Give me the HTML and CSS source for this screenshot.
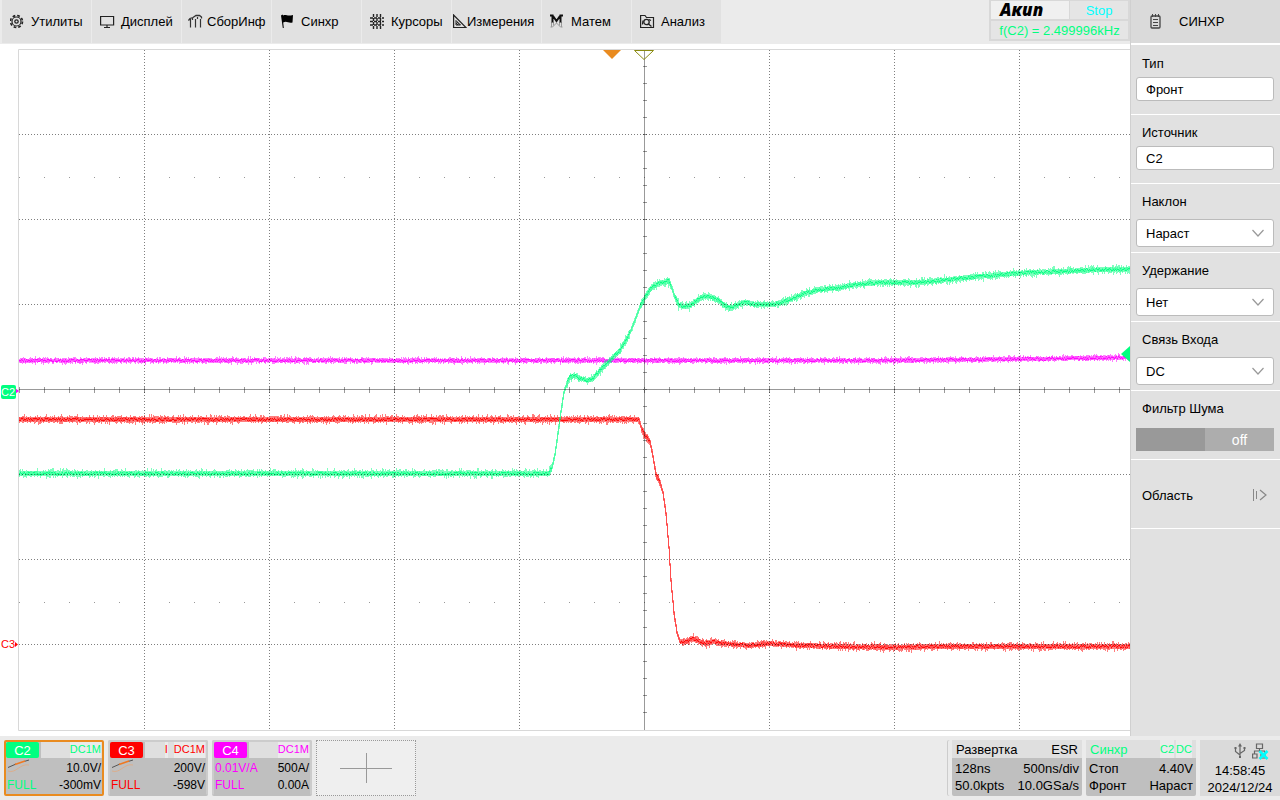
FILE: index.html
```html
<!DOCTYPE html>
<html lang="ru">
<head>
  <meta charset="UTF-8">
  <title>Акип - Осциллограф</title>
  <link rel="stylesheet" href="styles.css">
</head>
<body>

  <div class="main">
    <div class="screen">
      <header class="topbar">
        <nav class="menu">
          <button type="button">
            <svg width="16" height="16" viewBox="0 0 16 16" fill="none" stroke="#222">
              <circle cx="6.500" cy="7.500" r="6" stroke-width="1.600" stroke-dasharray="2.700 2.010"/>
              <circle cx="6.500" cy="7.500" r="4.500" stroke-width="1.200"/>
              <circle cx="6.500" cy="7.500" r="1.700" stroke-width="1.300"/>
            </svg>
            <span>Утилиты</span>
          </button>
          <button type="button">
            <svg width="16" height="16" viewBox="0 0 16 16" fill="none" stroke="#222">
              <path d="M.6 2.500h13v8.500h-13zM7 11v2M4 13.500h6" stroke-width="1.200"/>
            </svg>
            <span>Дисплей</span>
          </button>
          <button type="button" class="close">
            <svg width="16" height="16" viewBox="0 0 16 16" fill="none" stroke="#333">
              <path d="M.5 6.500L2 4.500L5 3.500L8 1.500H11.500L13.500 3V4.500" stroke-width="1.300"/>
              <path d="M2.500 5V13.500M7.500 5V13.500M12.500 5V13.500M4.500 4V6M9.500 3V5" stroke-width="1.200"/>
            </svg>
            <span>СборИнф</span>
          </button>
          <button type="button">
            <svg width="16" height="16" viewBox="0 0 16 16">
              <path d="M1 1.500L2.500 .5L3.200 1.500C6 0 7 2.500 13 1L12.500 8.500C8 9.500 7 6.500 3.200 8.500L3.800 14H2.800z" fill="#000"/>
            </svg>
            <span>Синхр</span>
          </button>
          <button type="button">
            <svg width="16" height="16" viewBox="0 0 16 16" fill="none" stroke="#222">
              <path d="M3.500 0V15M7 0V15M10.500 0V15" stroke-width="1.400" stroke-dasharray="3 1"/>
              <path d="M0 4H14M0 7.500H14M0 11H14" stroke-width="1.400" stroke-dasharray="3 1"/>
            </svg>
            <span>Курсоры</span>
          </button>
          <button type="button" class="closest">
            <svg width="14" height="16" viewBox="0 0 14 16" fill="none" stroke="#222">
              <path d="M.6 1V13.500H13z" stroke-width="1.200"/>
              <path d="M3 6.500V11H7.500zM3 9L5 11M4 8L6.500 11"/>
            </svg>
            <span>Измерения</span>
          </button>
          <button type="button">
            <svg width="16" height="16" viewBox="0 0 16 16" fill="none" stroke="#111">
              <path d="M.5 13H2.500L6.500 9L10.500 13H12.500M1.500 13V8M3.500 11.500V8M9.500 11.500V8M11.500 13V8" stroke="#999"/>
              <path d="M0 1.500H3.500M9.500 1.500H13M2.500 1.500V8.500M10.500 1.500V8.500M3 2L6.500 7L10 2" stroke-width="2"/>
            </svg>
            <span>Матем</span>
          </button>
          <button type="button">
            <svg width="16" height="16" viewBox="0 0 16 16" fill="none" stroke="#222">
              <path d="M.6 1.500H5L6.500 3.500H13.500V13.500H.6z" stroke-width="1.200"/>
              <circle cx="6.500" cy="8" r="2.700" stroke-width="1.300"/>
              <path d="M8.500 10L11.500 12.500M3 6.500L2.500 10.500M9 5.500L11 6.500" stroke-width="1.300"/>
            </svg>
            <span>Анализ</span>
          </button>
        </nav>
        <div class="status">
          <div class="logo">Акип</div>
          <div class="state">Stop</div>
          <div class="freq">f(C2) = 2.499996kHz</div>
        </div>
      </header>

      <div class="plot">
        <svg id="plot" viewBox="0 44 1130 692" preserveAspectRatio="none">
          <path class="frame" d="M1130 49.500H18.500V730.500H1130"/>
          <g id="traces"></g>
          <g id="grid"></g>
          <path d="M603 50H621L612 59z" fill="#e98b20"/>
          <path d="M634.500 50.500H653.500L644 59.500z" fill="none" stroke="#8a8a10"/>
          <path d="M1130 346V362L1121 354z" fill="#00ff80"/>
          <path d="M15 388L19 391L15 394z" fill="#ff00ff"/>
          <path d="M15 642L18 644.500L15 647z" fill="#ff0000"/>
        </svg>
        <span class="marker marker-c2">C2</span>
        <span class="marker marker-c3">C3</span>
      </div>
    </div>

    <aside class="panel">
      <h2>
        <svg width="12" height="15" viewBox="0 0 12 15" fill="none" stroke="#444">
          <rect x="1" y="2" width="9" height="12" rx="1" stroke-width="1.300"/>
          <path d="M3 5.500H8M3 8.500H8M3 11.500H8M2.500 0V3M5.500 0V3M8.500 0V3"/>
        </svg>
        СИНХР
      </h2>
      <div class="field">
        <label for="type">Тип</label>
        <input type="text" id="type" value="Фронт">
      </div>
      <div class="field">
        <label for="source">Источник</label>
        <input type="text" id="source" value="C2">
      </div>
      <div class="field">
        <label for="slope">Наклон</label>
        <div class="select">
          <select id="slope"><option>Нараст</option></select>
          <svg width="12" height="8" viewBox="0 0 12 8"><path d="M.5 1L6 7L11.500 1"/></svg>
        </div>
      </div>
      <div class="field">
        <label for="holdoff">Удержание</label>
        <div class="select">
          <select id="holdoff"><option>Нет</option></select>
          <svg width="12" height="8" viewBox="0 0 12 8"><path d="M.5 1L6 7L11.500 1"/></svg>
        </div>
      </div>
      <div class="field">
        <label for="coupling">Связь Входа</label>
        <div class="select">
          <select id="coupling"><option>DC</option></select>
          <svg width="12" height="8" viewBox="0 0 12 8"><path d="M.5 1L6 7L11.500 1"/></svg>
        </div>
      </div>
      <div class="field">
        <label for="noise">Фильтр Шума</label>
        <div class="switch">
          <input type="checkbox" id="noise">
          <span>off</span>
        </div>
      </div>
      <button type="button" class="zone">
        Область
        <svg width="16" height="14" viewBox="0 0 16 14" fill="none" stroke="#888">
          <path d="M1.500 1V13M4.500 3V11" />
          <path d="M8 2L14 7L8 12" stroke-width="1.200"/>
        </svg>
      </button>
    </aside>
  </div>

  <footer class="bottombar">
    <button type="button" class="channel c2 active">
      <span class="chip">C2</span>
      <span class="input"><b>DC1M</b></span>
      <span class="row">
        <svg width="24" height="14" viewBox="0 0 24 14" fill="none">
          <path d="M1 12C9 15 13 4 22 6" stroke="#dcae8c"/>
          <path d="M1 8.500L9 5M17 2.500L22 1" stroke="#555"/>
          <path d="M8 5.500L18 2" stroke="#f07820" stroke-width="1.600"/>
        </svg>
        <span>10.0V/</span>
      </span>
      <span class="row"><em>FULL</em><span>-300mV</span></span>
    </button>
    <button type="button" class="channel c3">
      <span class="chip">C3</span>
      <span class="input"><b>I</b><b>DC1M</b></span>
      <span class="row">
        <svg width="24" height="14" viewBox="0 0 24 14" fill="none">
          <path d="M1 12C9 15 13 4 22 6" stroke="#dcae8c"/>
          <path d="M1 8.500L9 5M17 2.500L22 1" stroke="#555"/>
          <path d="M8 5.500L18 2" stroke="#f07820" stroke-width="1.600"/>
        </svg>
        <span>200V/</span>
      </span>
      <span class="row"><em>FULL</em><span>-598V</span></span>
    </button>
    <button type="button" class="channel c4">
      <span class="chip">C4</span>
      <span class="input"><b>DC1M</b></span>
      <span class="row"><em>0.01V/A</em><span>500A/</span></span>
      <span class="row"><em>FULL</em><span>0.00A</span></span>
    </button>
    <button type="button" class="add" aria-label="Добавить">
      <svg width="52" height="30" viewBox="0 0 52 30"><path d="M0 15.500H52M26.500 0V30" stroke="#999"/></svg>
    </button>

    <div class="info timebase">
      <div class="head"><span>Развертка</span><span>ESR</span></div>
      <div class="row"><span>128ns</span><span>500ns/div</span></div>
      <div class="row"><span>50.0kpts</span><span>10.0GSa/s</span></div>
    </div>
    <div class="info trigger">
      <div class="head"><span>Синхр</span><span class="tags"><b>C2</b><b>DC</b></span></div>
      <div class="row"><span>Стоп</span><span>4.40V</span></div>
      <div class="row"><span>Фронт</span><span>Нараст</span></div>
    </div>
    <div class="clock">
      <div class="links">
        <svg width="12" height="16" viewBox="0 0 12 16" fill="none" stroke="#666">
          <path d="M6 2V14M6 12L1.500 8.500V5M6 10.500L10.500 7.500V5" stroke-width="1.200"/>
          <path d="M4 3.500L6 0L8 3.500z" fill="#666" stroke="none"/>
          <path d="M.5 4H2.500V6H.5zM9.500 4H11.500V6H9.500zM5 13H7V15H5z" fill="#666" stroke="none"/>
        </svg>
        <svg width="17" height="17" viewBox="0 0 17 17" fill="none" stroke="#666" stroke-width="1.200">
          <path d="M4.500 1H10.500V5.500H4.500zM7.500 5.500V8M2.500 11V8H12.500V10M.6 11H5V15H.6zM9 11H13V15H9z"/>
          <path d="M7.500 8L15.500 16M15.500 8L7.500 16" stroke="#00ffff" stroke-width="2.500"/>
        </svg>
      </div>
      <div>14:58:45</div>
      <div>2024/12/24</div>
    </div>
  </footer>

  <script src="script.js"></script>
</body>
</html>
```
FILE: styles.css
```css
* {
  box-sizing: border-box;
  margin: 0;
  padding: 0;
}

body {
  display: flex;
  flex-direction: column;
  height: 100vh;
  background-color: #ebebeb;
  color: #000;
  font-family: "Liberation Sans", Arial, sans-serif;
  font-size: 13px;
}

button, input, select {
  border: 0;
  background: none;
  color: inherit;
  font: inherit;
}

svg {
  display: block;
  flex: none;
}

.main {
  display: flex;
  flex: 1;
  min-height: 0;
}

.screen {
  display: flex;
  flex-direction: column;
  flex: 1;
  min-width: 0;
}

/* верхнее меню */
.topbar {
  display: flex;
  justify-content: space-between;
  align-items: flex-start;
  height: 44px;
}

.menu {
  display: flex;
  gap: 1px;
  padding-left: 2px;
}

.menu button {
  display: flex;
  align-items: center;
  gap: 5px;
  width: 89px;
  height: 43px;
  padding-left: 8px;
  background-color: #e1e1e1;
}

.menu button.close {
  gap: 3px;
  padding-left: 6px;
}

.menu button.closest {
  gap: 0;
  padding-left: 1px;
}

.status {
  display: grid;
  grid-template-columns: 78px 58px;
  gap: 2px 1px;
  padding: 1px;
  border: 1px solid #d8d8d8;
  border-top: 0;
  background-color: #d8d8d8;
  text-align: center;
}

.status div {
  height: 18px;
  line-height: 20px;
  background-color: #e5e5e5;
}

.status .logo {
  padding-left: 9px;
  background-color: #f0f0f0;
  font-family: "Open Sans", "Liberation Sans", sans-serif;
  font-size: 17px;
  font-style: italic;
  font-weight: 800;
  line-height: 18px;
  text-align: left;
}

.status .state {
  color: #00ffff;
}

.status .freq {
  grid-column: span 2;
  color: #00ff80;
}

/* осциллограмма */
.plot {
  position: relative;
  flex: 1;
  min-height: 0;
  background-color: #fff;
}

.plot svg {
  width: 100%;
  height: 100%;
}

.frame {
  fill: none;
  stroke: #d8d8d8;
}

#grid path, #traces path {
  fill: none;
  shape-rendering: crispEdges;
}

.marker {
  position: absolute;
  left: 1px;
  height: 14px;
  font-size: 11px;
  line-height: 14px;
}

.marker-c2 {
  top: 49.3%;
  width: 15px;
  border-radius: 2px;
  background-color: #00ff80;
  color: #fff;
}

.marker-c3 {
  top: 85.7%;
  color: #ff0000;
}

/* панель синхронизации */
.panel {
  width: 150px;
  border-left: 1px solid #d0d0d0;
  background-color: #e1e1e1;
}

.panel h2 {
  display: flex;
  align-items: center;
  gap: 17px;
  height: 45px;
  margin-bottom: 1px;
  padding-left: 19px;
  border-bottom: 2px solid #fff;
  background-color: #dadada;
  font-size: 13px;
  font-weight: normal;
}

.field {
  display: flex;
  flex-direction: column;
  gap: 5px;
  height: 69px;
  padding: 6px 6px 0 5px;
  border-bottom: 1px solid #fff;
}

.field label {
  padding-left: 6px;
  line-height: 24px;
}

.field input[type="text"], .field select {
  width: 100%;
  height: 28px;
  padding: 0 9px;
  border: 1px solid #bbb;
  border-radius: 3px;
  background-color: #fff;
  appearance: none;
}

.field input[type="text"] {
  height: 24px;
  margin-top: -4px;
}

.select {
  display: grid;
  align-items: center;
}

.select select, .select svg {
  grid-area: 1 / 1;
}

.select svg {
  justify-self: end;
  margin-right: 10px;
  fill: none;
  stroke: #999;
  stroke-width: 1.2;
  pointer-events: none;
}

.switch {
  display: grid;
  grid-template-columns: 1fr 1fr;
  height: 23px;
  margin-top: 2px;
  background-color: #adadad;
  color: #fff;
  font-size: 14px;
  line-height: 24px;
  text-align: center;
}

.switch input {
  width: 100%;
  height: 23px;
  background-color: #999;
  appearance: none;
}

.zone {
  display: flex;
  align-items: center;
  justify-content: space-between;
  width: 100%;
  height: 69px;
  padding: 2px 12px 0 11px;
  border-bottom: 1px solid #fff;
}

/* нижняя строка */
.bottombar {
  display: flex;
  gap: 4px;
  height: 64px;
  padding: 4px 0 4px 4px;
}

.channel {
  display: grid;
  grid-template-columns: 35px 1fr;
  grid-template-rows: 17px 17px 17px;
  align-content: start;
  width: 100px;
  border: 2px solid #ccc;
  border-bottom-color: #bfbfbf;
  border-radius: 2px;
  background-color: #bfbfbf;
  font-size: 12px;
}

.channel.active {
  border-color: #e98b20;
}

.channel .chip {
  width: 33px;
  height: 16px;
  border-radius: 2px;
  background-color: currentColor;
  font-size: 13px;
  line-height: 18px;
}

.channel .chip::first-line {
  color: #fff;
}

.channel .input {
  display: flex;
  justify-content: flex-end;
  gap: 6px;
  height: 16px;
  padding-right: 1px;
  background-color: #dfdfdf;
  font-size: 11px;
  line-height: 15px;
}

.channel b, .tags b {
  background-color: #ebebeb;
  font-weight: normal;
}

.channel .row {
  grid-column: span 2;
  display: flex;
  justify-content: space-between;
  padding: 0 1px;
  color: #000;
  line-height: 19px;
}

.channel em {
  font-style: normal;
}

.c2, .c2 em {
  color: #00ff80;
}

.c3, .c3 em {
  color: #ff0000;
}

.c4, .c4 em {
  color: #ff00ff;
}

.add {
  display: flex;
  align-items: center;
  justify-content: center;
  width: 100px;
  border: 1px dotted #999;
  background-color: #efefef;
}

.info {
  border-radius: 2px;
  background-color: #bfbfbf;
}

.timebase {
  width: 130px;
  margin-left: auto;
  box-shadow: -4px 0 0 #ebebeb, -5px 0 0 #ccc;
}

.trigger {
  width: 110px;
}

.info .head, .info .row {
  display: flex;
  justify-content: space-between;
  padding: 0 3px;
  line-height: 17px;
}

.info .head {
  height: 18px;
  margin-bottom: 2px;
  padding: 0 4px;
  background-color: #dfdfdf;
  line-height: 20px;
}

.trigger .head {
  color: #00ff80;
}

.tags {
  display: flex;
  gap: 2px;
  font-size: 11px;
  line-height: 18px;
}

.clock {
  width: 80px;
  background-color: #dadada;
  line-height: 17px;
  text-align: center;
}

.links {
  display: flex;
  justify-content: flex-end;
  gap: 6px;
  height: 22px;
  padding: 3px 11px 0 0;
}
```
FILE: script.js
```js
// опорные точки осциллограмм
const green = [[19, 473], [549, 473], [552, 467], [555, 454], [558, 433], [561, 411], [564, 392],
  [567, 383], [570, 377], [574, 375], [580, 378], [588, 380], [594, 377], [600, 370], [607, 363],
  [614, 356], [620, 350], [625, 342], [630, 332], [635, 320], [640, 306], [645, 297], [650, 289],
  [655, 285], [661, 282], [665, 282], [668, 280], [671, 285], [675, 297], [679, 305], [684, 306],
  [690, 305], [697, 300], [703, 296], [710, 296], [717, 299], [723, 304], [730, 308], [738, 304],
  [745, 302], [755, 304], [775, 304], [790, 299], [805, 293], [820, 289], [840, 287], [865, 283],
  [880, 282], [920, 282], [950, 279], [990, 275], [1030, 272], [1060, 271], [1100, 269], [1131, 269]];
const magenta = [[19, 360], [880, 360], [980, 359], [1060, 358], [1131, 357]];
const red = [[19, 419], [639, 419], [642, 430], [645, 435], [650, 441], [653, 456], [656, 474],
  [660, 482], [663, 492], [666, 513], [669, 547], [671, 580], [674, 612], [677, 632], [680, 641],
  [686, 641], [693, 638], [700, 641], [706, 643], [714, 641], [722, 643], [750, 645], [770, 643],
  [800, 645], [840, 646], [890, 647], [930, 646], [1131, 646]];

let seed = 7;
function random() {
  seed = (seed * 16807) % 2147483647;
  return seed / 2147483647;
}

function level(points, x) {
  let i = 1;
  while (i < points.length - 1 && points[i][0] < x) i++;
  const [x1, y1] = points[i - 1];
  const [x2, y2] = points[i];
  return y1 + (y2 - y1) * (x - x1) / (x2 - x1);
}

function addPath(parent, d, color, opacity, dash) {
  const path = document.createElementNS("http://www.w3.org/2000/svg", "path");
  path.setAttribute("d", d);
  path.setAttribute("stroke", color);
  path.setAttribute("stroke-opacity", opacity);
  if (dash) path.setAttribute("stroke-dasharray", dash);
  document.getElementById(parent).appendChild(path);
}

function drawTrace(points, color, noise) {
  let outer = "", inner = "", core = "";
  for (let x = 19; x < 1130; x++) {
    const a = level(points, x);
    const b = level(points, x + 1);
    // на крутых участках шум почти не виден
    const steep = Math.abs(b - a) > 2;
    const n = steep ? 2 : noise;
    const top = Math.min(a, b);
    const bottom = Math.max(a, b) + 1;
    outer += `M${x + 0.5} ${Math.round(top - n * (0.4 + random() * random()))}V${Math.round(bottom + n * (0.4 + random() * random()))}`;
    if (steep) {
      inner += `M${x + 0.5} ${Math.round(top)}V${Math.round(bottom)}`;
    } else {
      const shift = (random() - 0.5) * 3;
      inner += `M${x + 0.5} ${Math.round(top - 1 + shift)}V${Math.round(bottom + 1 + shift)}`;
      core += `M${x + 0.5} ${Math.round(top + (random() - 0.5) * 3)}v1`;
    }
  }
  addPath("traces", outer, color, 0.5);
  addPath("traces", inner, color, 0.4);
  addPath("traces", core, color, 0.9);
}

drawTrace(magenta, "#ff00ff", 3);
drawTrace(red, "#ff0000", 4);
drawTrace(green, "#00ff80", 4);

// сетка
let dotted = "", solid = "M644.5 50V730M19 389.5H1130", ticks = "";
for (let x = 144; x < 1130; x += 125) {
  if (x !== 644) dotted += `M${x + 0.5} 50V730`;
}
for (let y = 134; y < 729; y += 85) {
  if (y !== 389) dotted += `M19 ${y + 0.5}H1130`;
}
for (let x = 19; x < 1130; x += 25) {
  ticks += `M${x + 0.5} 387V393`;
  ticks += `M${x} 177.5h1M${x} 602.5h1`;
}
for (let y = 66; y < 729; y += 17) {
  ticks += `M643 ${y + 0.5}h4`;
}
addPath("grid", dotted, "#000", 0.5, "1 2");
addPath("grid", solid, "#000", 0.4);
addPath("grid", ticks, "#000", 0.4);
```
